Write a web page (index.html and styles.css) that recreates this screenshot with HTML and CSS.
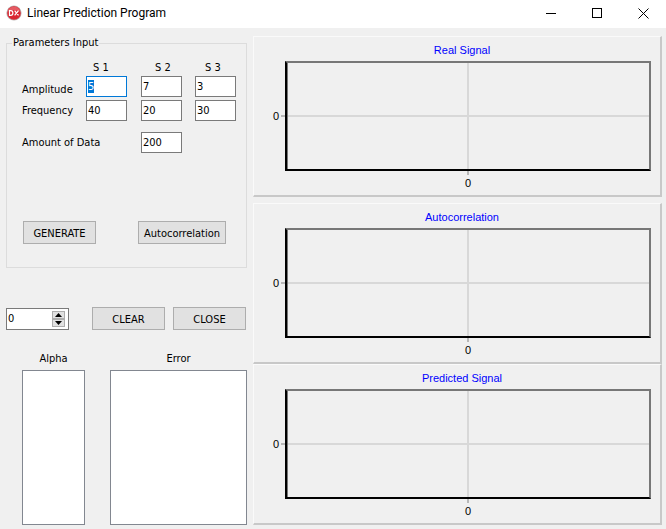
FILE: index.html
```html
<!DOCTYPE html>
<html lang="en">
<head>
<meta charset="utf-8">
<meta name="viewport" content="width=device-width, initial-scale=1">
<title>Linear Prediction Program</title>
<link rel="stylesheet" href="styles.css">
</head>
<body>
<header class="titlebar">
  <svg class="app-icon" viewBox="0 0 16 16" aria-hidden="true">
    <circle cx="8" cy="8" r="7.6" fill="#b9b4b4"/>
    <circle cx="8" cy="8" r="6.8" fill="#d92632"/>
    <path d="M1.8 6.5a6.4 6.4 0 0 1 12.4 0Q8 3.5 1.8 6.5Z" fill="#e65a62"/>
    <path d="M3.5 5.7v4.6h1.3a2.1 2.3 0 0 0 0-4.6ZM8.6 5.6l3.9 4.8M12.5 5.6l-3.9 4.8" fill="none" stroke="#fff" stroke-width="1.2"/>
  </svg>
  <h1 class="title">Linear Prediction Program</h1>
  <div class="window-controls">
    <button class="window-button" type="button" aria-label="Minimize"><svg viewBox="0 0 11 11"><path d="M0 5.500h10" /></svg></button>
    <button class="window-button" type="button" aria-label="Maximize"><svg viewBox="0 0 11 11"><path d="M.5.5h9v9h-9z"/></svg></button>
    <button class="window-button" type="button" aria-label="Close"><svg class="smooth" viewBox="0 0 11 11"><path d="M.5.5l10 10M10.500.5l-10 10"/></svg></button>
  </div>
</header>
<main class="content">
  <section class="controls">
    <fieldset class="parameters">
      <legend>Parameters Input</legend>
      <div class="signal-names"><span id="s1">S 1</span><span id="s2">S 2</span><span id="s3">S 3</span></div>
      <div class="fields">
        <label class="low" id="amp" for="amp1">Amplitude</label>
        <input id="amp1" class="field" type="text" value="5" autofocus>
        <input class="field" type="text" value="7" aria-labelledby="amp s2">
        <input class="field" type="text" value="3" aria-labelledby="amp s3">
        <label id="freq" for="freq1">Frequency</label>
        <input id="freq1" class="field" type="text" value="40">
        <input class="field" type="text" value="20" aria-labelledby="freq s2">
        <input class="field" type="text" value="30" aria-labelledby="freq s3">
      </div>
      <div class="fields amount">
        <label class="wide" for="amount">Amount of Data</label>
        <input id="amount" class="field" type="text" value="200">
      </div>
      <div class="actions">
        <button class="button" type="button">GENERATE</button>
        <button class="button large" type="button">Autocorrelation</button>
      </div>
    </fieldset>
    <div class="toolbar">
      <div class="spinner">
        <input type="text" value="0" aria-label="Order">
        <div class="steps">
          <button type="button" aria-label="Increase"><svg viewBox="0 0 7 4"><path d="M0 4L3.500 0L7 4z"/></svg></button>
          <button type="button" aria-label="Decrease"><svg viewBox="0 0 7 4"><path d="M0 0L3.500 4L7 0z"/></svg></button>
        </div>
      </div>
      <button class="button" type="button">CLEAR</button>
      <button class="button" type="button">CLOSE</button>
    </div>
    <div class="results">
      <label for="alpha">Alpha</label>
      <label for="error">Error</label>
      <textarea id="alpha" class="output"></textarea>
      <textarea id="error" class="output"></textarea>
    </div>
  </section>
  <section class="charts">
    <figure class="chart spaced">
      <figcaption>Real Signal</figcaption>
      <div class="graph"><span class="y-label">0</span><i class="tick"></i><div class="plot"></div><i class="tick down"></i><span class="x-label">0</span></div>
    </figure>
    <figure class="chart">
      <figcaption>Autocorrelation</figcaption>
      <div class="graph"><span class="y-label">0</span><i class="tick"></i><div class="plot"></div><i class="tick down"></i><span class="x-label">0</span></div>
    </figure>
    <figure class="chart">
      <figcaption>Predicted Signal</figcaption>
      <div class="graph"><span class="y-label">0</span><i class="tick"></i><div class="plot"></div><i class="tick down"></i><span class="x-label">0</span></div>
    </figure>
  </section>
</main>
<script src="app.js"></script>
</body>
</html>
```
FILE: styles.css
```css
* { box-sizing: border-box; }

body {
  margin: 0;
  min-height: 100vh;
  background: #f0f0f0;
  color: #000;
  font: 11px/14px Tahoma, "DejaVu Sans Condensed", sans-serif;
}

button, input, textarea { font: inherit; color: inherit; margin: 0; border-radius: 0; }

.titlebar {
  display: flex;
  align-items: center;
  height: 28px;
  padding-left: 6px;
  gap: 5px;
  background: #fff;
}
.app-icon { width: 16px; height: 16px; margin-bottom: 3px; }
.title { flex: 1; margin: 0 0 2px; font: 12px/16px "Segoe UI", Roboto, sans-serif; }
.window-controls { display: flex; margin-bottom: 2px; }
.window-button {
  display: grid;
  place-items: center;
  width: 46px;
  height: 24px;
  padding: 0;
  border: 0;
  background: none;
}
.window-button svg { width: 11px; height: 11px; fill: none; stroke: #000; shape-rendering: crispEdges; }
.window-button .smooth { shape-rendering: auto; }

.content { display: flex; align-items: flex-start; gap: 6px; padding: 8px 4px 4px 6px; }
.controls { flex: none; width: 241px; }

.parameters {
  height: 232px;
  margin: 0;
  padding: 11px 0 0 15px;
  border: 1px solid #dcdcdc;
}
.parameters legend { margin-left: -10px; padding: 0 1px; }
.signal-names { display: grid; grid-template-columns: 62px 50px auto; padding-left: 71px; margin-bottom: 1px; }
.fields { display: grid; grid-template-columns: 64px 55px 54px 41px; row-gap: 3px; align-items: center; }
.fields .low { align-self: end; }
.fields .wide { grid-column: span 2; }
.amount { margin-top: 11px; }
.field {
  width: 41px;
  height: 21px;
  padding: 0 1px 1px;
  border: 1px solid #7a7a7a;
  background: #fff;
  outline: none;
}
.field:focus { border-color: #0078d7; }
::selection { background: #0078d7; color: #fff; }

.actions { display: flex; gap: 42px; margin: 68px 0 0 1px; }
.button {
  width: 73px;
  height: 23px;
  padding: 2px 0 0;
  border: 1px solid #adadad;
  background: #e1e1e1;
}
.button.large { width: 88px; }

.toolbar { display: flex; align-items: flex-end; gap: 8px; margin-top: 39px; }
.spinner {
  display: flex;
  align-items: center;
  width: 63px;
  height: 22px;
  margin-right: 15px;
  padding-right: 3px;
  border: 1px solid #7a7a7a;
  background: #fff;
}
.spinner input { flex: 1; min-width: 0; padding: 0 1px; border: 0; background: none; outline: none; }
.steps { display: grid; }
.steps button {
  display: grid;
  place-items: center;
  width: 13px;
  height: 8px;
  padding: 0;
  border: 1px solid #adadad;
  background: #e1e1e1;
}
.steps svg { width: 7px; height: 4px; }

.results {
  display: grid;
  grid-template-columns: 63px 137px;
  column-gap: 25px;
  row-gap: 4px;
  margin: 22px 0 0 16px;
  text-align: center;
}
.output {
  display: block;
  height: 155px;
  border: 1px solid #828790;
  background: #fff;
  resize: none;
  outline: none;
}

.charts { flex: 1; min-width: 0; }
.chart {
  height: 161px;
  margin: 0;
  padding: 6px 9px 0 19px;
  border: solid;
  border-width: 1px 2px 2px 1px;
  border-color: #fafafa #c8c8c8 #c8c8c8 #fafafa;
  font-family: "Liberation Sans", Arial, sans-serif;
}
.chart.spaced { margin-bottom: 6px; }
.chart figcaption { color: #00f; text-align: center; margin-bottom: 4px; }
.graph { display: grid; grid-template-columns: 8px 4px 1fr; grid-template-rows: 110px 4px 14px; align-items: center; }
.tick { height: 2px; background: #b8b8b8; }
.tick.down { grid-column: 3; width: 2px; height: 4px; justify-self: center; }
.x-label { grid-column: 3; justify-self: center; padding-top: 2px; }
.plot {
  height: 110px;
  border: solid;
  border-width: 2px;
  border-color: #777 #777 #000 #000;
  background:
    linear-gradient(#d8d8d8, #d8d8d8) center / 2px 100% no-repeat,
    linear-gradient(#d8d8d8, #d8d8d8) center / 100% 2px no-repeat;
  box-shadow: inset 1px 0 #777;
}
```
FILE: app.js
```js
document.getElementById("amp1").select();
```
